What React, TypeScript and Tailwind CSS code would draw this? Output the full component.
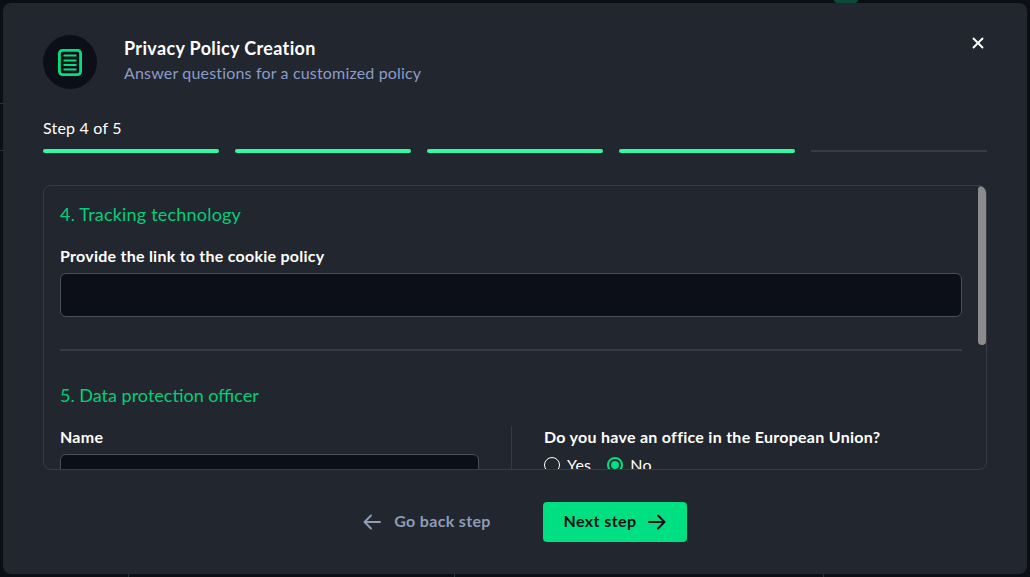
import React from "react";
import { X } from "lucide-react";

const font = "font-['Lato','Noto_Sans',sans-serif]";

function DocIcon() {
  return (
    <svg width="24" height="27" viewBox="0 0 24 27" fill="none">
      <rect x="1.4" y="1.4" width="21.2" height="24.2" rx="3" stroke="#00df81" strokeWidth="2.8" />
      <path d="M5.5 6.5h13M5.5 11.5h13M5.5 16h13M5.5 20.5h13" stroke="#00df81" strokeWidth="1.8" />
    </svg>
  );
}

function Arrow({ back }: { back?: boolean }) {
  return (
    <svg width="18" height="16" viewBox="0 0 18 16" fill="none" stroke="currentColor" strokeWidth="2" strokeLinecap="round" strokeLinejoin="round">
      {back ? <path d="M17 8H1.5M8 1.5 1.5 8 8 14.5" /> : <path d="M1 8h15.5M10 1.5 16.5 8 10 14.5" />}
    </svg>
  );
}

function Radio({ label, checked }: { label: string; checked?: boolean }) {
  return (
    <label className="flex items-center gap-[7px]">
      <span
        className={
          checked
            ? "flex h-4 w-4 items-center justify-center rounded-full border-2 border-[#00df81]"
            : "h-4 w-4 rounded-full border-[1.5px] border-white"
        }
      >
        {checked && <span className="h-2 w-2 rounded-full bg-[#00df81]" />}
      </span>
      <span className="text-[16px] leading-5 tracking-[0.2px] text-white">{label}</span>
    </label>
  );
}

export default function App() {
  return (
    <div className={`relative flex h-[577px] w-full items-center justify-center overflow-hidden bg-[#0b0e15] ${font}`}>
      <div className="absolute left-[833px] top-[-10px] h-[14px] w-[26px] rounded-full bg-[#0d4a35]" />
      <div className="absolute left-0 top-[103px] h-px w-[3px] bg-[#1b3a30]" />
      <div className="absolute left-0 top-[150px] h-px w-[3px] bg-[#1b3a30]" />
      <div className="absolute bottom-0 left-[128px] h-[3px] w-px bg-[#1b3a30]" />
      <div className="absolute bottom-0 left-[454px] h-[3px] w-px bg-[#1b3a30]" />
      <div className="absolute bottom-0 left-[823px] h-[3px] w-px bg-[#1b3a30]" />
      <div className="relative flex h-[571px] w-[1024px] flex-col rounded-lg bg-[#22262e] px-10 pt-8">
        <button className="absolute right-[40px] top-[31px] text-white">
          <X size={18} strokeWidth={2.5} />
        </button>

        <div className="flex h-[54px] items-start gap-[27px]">
          <div className="flex h-[54px] w-[54px] items-center justify-center rounded-full bg-[#0c0f17]">
            <DocIcon />
          </div>
          <div className="pt-px">
            <div className="text-[18px] font-bold leading-6 tracking-[0.35px] text-white">Privacy Policy Creation</div>
            <div className="mt-px text-[16px] leading-6 tracking-[0.17px] text-[#8b9cc8]">Answer questions for a customized policy</div>
          </div>
        </div>

        <div className="mt-[29px] text-[16px] leading-5 tracking-[0.2px] text-white">Step 4 of 5</div>
        <div className="mt-[11px] flex h-1 items-center gap-4">
          {[0, 1, 2, 3].map((i) => (
            <div key={i} className="h-1 flex-1 rounded-full bg-[#2dfca5]" />
          ))}
          <div className="h-[2px] flex-1 bg-[#363b46]" />
        </div>

        <div className="relative mt-8 h-[285px] overflow-hidden rounded-lg border border-[#363b46] pl-4 pr-6">
          <div className="absolute right-0 top-0 h-[159px] w-2 rounded-full bg-[#8c8c8c]" />
          <div className="pt-4">
            <h3 className="text-[18px] leading-6 tracking-[0.2px] text-[#00cf78]">4. Tracking technology</h3>
            <label className="mt-5 block text-[16px] font-bold leading-5 tracking-[0.25px] text-white">Provide the link to the cookie policy</label>
            <input className="mt-[7px] block h-11 w-full rounded-md border border-[#4a4f5c] bg-[#0c0f17]" />
            <div className="mt-8 h-[2px] bg-[#363b46]" />
            <h3 className="mt-8 text-[18px] leading-6 text-[#00cf78]">5. Data protection officer</h3>
            <div className="mt-[19px] flex">
              <div className="w-[419px] pt-px">
                <label className="block text-[16px] font-bold leading-5 tracking-[0.25px] text-white">Name</label>
                <input className="mt-[7px] block h-11 w-full rounded-md border border-[#4a4f5c] bg-[#0c0f17]" />
              </div>
              <div className="ml-8 border-l border-[#363b46] pl-8 pt-px">
                <label className="block text-[16px] font-bold leading-5 tracking-[0.28px] text-white">Do you have an office in the European Union?</label>
                <div className="mt-[8px] flex gap-[16px]">
                  <Radio label="Yes" />
                  <Radio label="No" checked />
                </div>
              </div>
            </div>
          </div>
        </div>

        <div className="mt-8 flex items-center justify-center gap-8">
          <button className="flex h-10 w-[168px] items-center justify-center gap-[13px] text-[16px] font-bold tracking-[0.33px] text-[#8f9bb8]">
            <Arrow back />
            <span className="pb-[2px]">Go back step</span>
          </button>
          <button className="flex h-10 w-[144px] items-center justify-center gap-3 rounded bg-[#00df81] text-[16px] font-bold tracking-[0.4px] text-[#0c0f17]">
            <span className="pb-[2px]">Next step</span>
            <Arrow />
          </button>
        </div>
      </div>
    </div>
  );
}
